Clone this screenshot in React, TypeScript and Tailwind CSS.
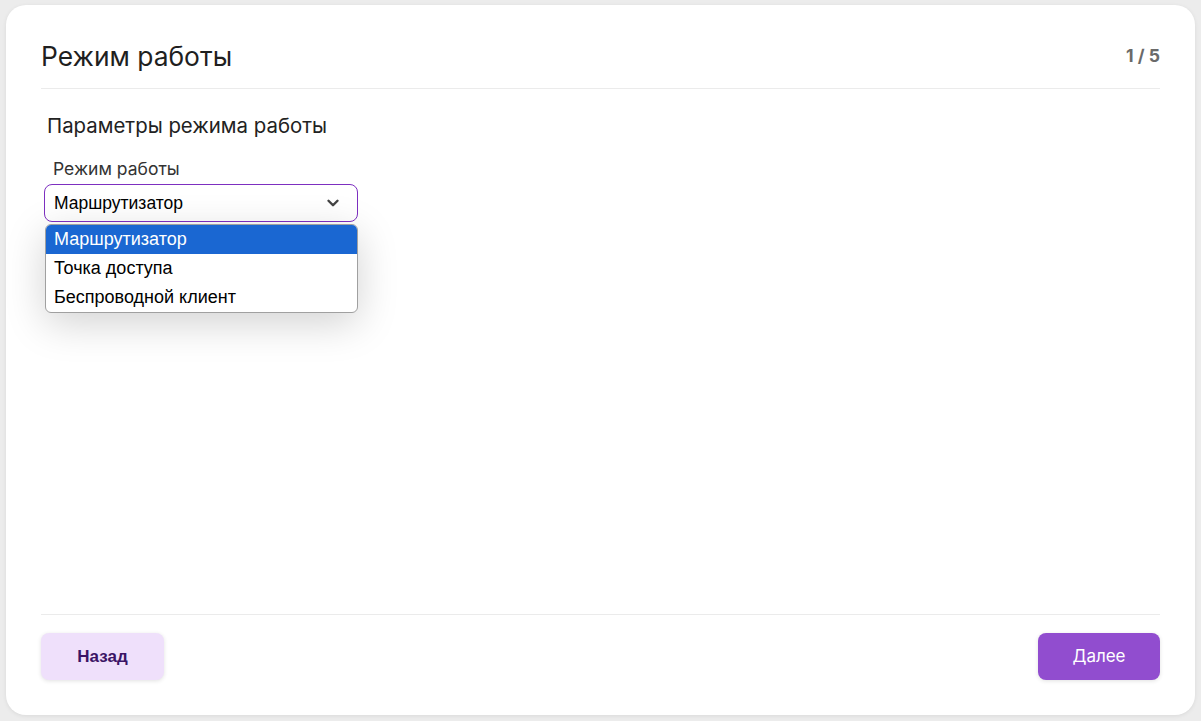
import { ChevronDown } from "lucide-react";

const options = ["Маршрутизатор", "Точка доступа", "Беспроводной клиент"];

const App = () => {
  const selected = options[0];

  return (
    <div className="min-h-[721px] bg-[#ececec] pt-[5px] pb-[6px] pl-[6px] pr-[6px] font-['Inter','Noto_Sans',sans-serif]">
      <div className="flex h-[710px] flex-col rounded-[20px] bg-white px-[35px] shadow-[0_1px_4px_rgba(0,0,0,0.08)]">
        <div className="flex items-center justify-between border-b border-[#ebebeb] pt-[35px] pb-[15px]">
          <h1 className="text-[26.4px] leading-[33px] text-[#1f1f1f]">Режим работы</h1>
          <span className="text-[17.6px] font-bold text-[#6a6a6a]">1 / 5</span>
        </div>

        <div className="flex-1">
          <h2 className="mt-[24px] ml-[6px] text-[20.4px] leading-[25px] text-[#222]">
            Параметры режима работы
          </h2>

          <div className="relative mt-[20px] ml-[3px] w-[314px]">
            <label className="ml-[9px] mb-[4px] block text-[17.5px] leading-[22px] text-[#333]">
              Режим работы
            </label>
            <div className="flex h-[38px] items-center justify-between rounded-[8px] border border-[#7d2fc0] bg-white pl-[9px] pr-[15px] font-['Liberation_Sans',Arial,sans-serif] text-[17.5px] text-black">
              <span>{selected}</span>
              <ChevronDown size={18} strokeWidth={3.2} className="text-[#444]" />
            </div>

            <div className="absolute top-[66px] left-[1px] w-[313px] overflow-hidden rounded-[6px] border border-[#a0a0a0] bg-white font-['Liberation_Sans',Arial,sans-serif] text-[18px] shadow-[0_10px_40px_rgba(0,0,0,0.18)]">
              {options.map((o) => (
                <div
                  key={o}
                  className={
                    o === selected
                      ? "h-[29px] bg-[#1a67d2] pl-[8px] leading-[29px] text-white"
                      : "h-[29px] pl-[8px] leading-[29px] text-black"
                  }
                >
                  {o}
                </div>
              ))}
            </div>
          </div>
        </div>

        <div className="flex items-center justify-between border-t border-[#ebebeb] pt-[18px] pb-[35px]">
          <button className="h-[47px] w-[123px] rounded-[8px] bg-[#efe0fb] font-['Liberation_Sans',Arial,sans-serif] text-[17px] font-bold text-[#3b1466] shadow-[0_1px_4px_rgba(0,0,0,0.12)]">
            Назад
          </button>
          <button className="h-[47px] w-[122px] rounded-[8px] bg-[#914dcf] text-[17px] text-white shadow-[0_1px_4px_rgba(0,0,0,0.12)]">
            Далее
          </button>
        </div>
      </div>
    </div>
  );
};

export default App;
